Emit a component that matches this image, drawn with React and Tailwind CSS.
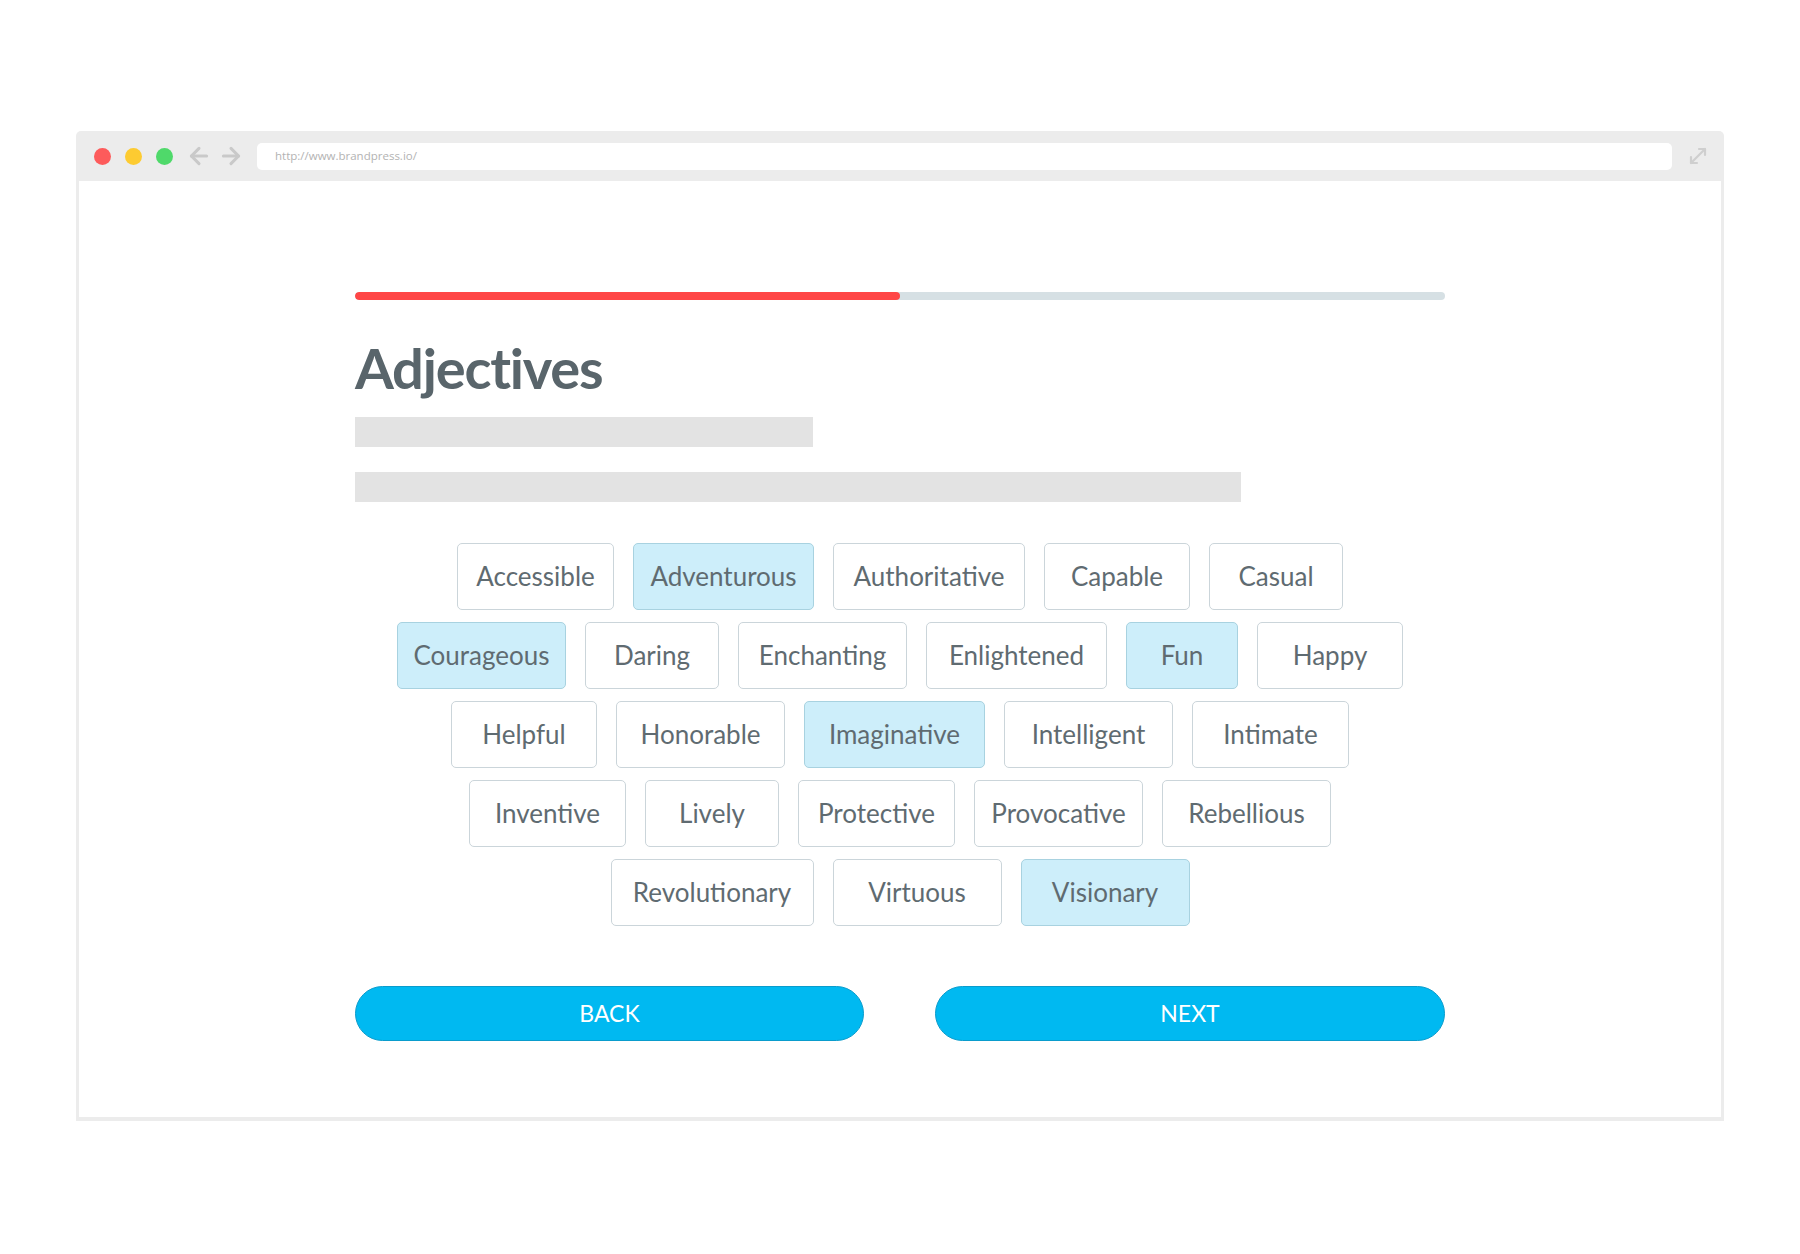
import React from "react";
import { ArrowLeft, ArrowRight, MoveDiagonal } from "lucide-react";

const rows = [
  [
    ["Accessible", "w-[157px]", false],
    ["Adventurous", "w-[181px]", true],
    ["Authoritative", "w-[192px]", false],
    ["Capable", "w-[146px]", false],
    ["Casual", "w-[134px]", false],
  ],
  [
    ["Courageous", "w-[169px]", true],
    ["Daring", "w-[134px]", false],
    ["Enchanting", "w-[169px]", false],
    ["Enlightened", "w-[181px]", false],
    ["Fun", "w-[112px]", true],
    ["Happy", "w-[146px]", false],
  ],
  [
    ["Helpful", "w-[146px]", false],
    ["Honorable", "w-[169px]", false],
    ["Imaginative", "w-[181px]", true],
    ["Intelligent", "w-[169px]", false],
    ["Intimate", "w-[157px]", false],
  ],
  [
    ["Inventive", "w-[157px]", false],
    ["Lively", "w-[134px]", false],
    ["Protective", "w-[157px]", false],
    ["Provocative", "w-[169px]", false],
    ["Rebellious", "w-[169px]", false],
  ],
  [
    ["Revolutionary", "w-[203px]", false],
    ["Virtuous", "w-[169px]", false],
    ["Visionary", "w-[169px]", true],
  ],
];

function Chip({ label, w, selected }) {
  return (
    <div
      className={
        "h-[67px] flex items-center justify-center rounded-[5px] border text-[26px] text-[#5f6b71] " +
        w +
        (selected
          ? " bg-[#cdeefa] border-[#a8d2e0]"
          : " bg-white border-[#cbd5da]")
      }
    >
      {label}
    </div>
  );
}

export default function App() {
  return (
    <div className="min-h-screen bg-white pt-[131px] font-['Lato','Open_Sans',sans-serif]">
      <div className="mx-auto w-[1648px] h-[990px] bg-[#ececec] rounded-t-[5px] px-[3px] pb-[4px] flex flex-col">
        {/* top bar */}
        <div className="h-[50px] flex items-center shrink-0">
          <div className="ml-[15px] flex items-center gap-[14px]">
            <div className="w-[17px] h-[17px] rounded-full bg-[#fd5b5b]" />
            <div className="w-[17px] h-[17px] rounded-full bg-[#fdcb31]" />
            <div className="w-[17px] h-[17px] rounded-full bg-[#4fd96a]" />
          </div>
          <div className="ml-[13px] flex items-center gap-[6px] text-[#c9c9c9]">
            <ArrowLeft size={26} strokeWidth={2.8} />
            <ArrowRight size={26} strokeWidth={2.8} />
          </div>
          <div className="ml-[13px] w-[1415px] h-[27px] bg-white rounded-[5px] flex items-center pl-[18px] text-[11.5px] text-[#b3b3b3] font-['Open_Sans',sans-serif]">
            http://www.brandpress.io/
          </div>
          <div className="ml-[14px] text-[#cfcfcf]">
            <MoveDiagonal size={24} strokeWidth={2.2} />
          </div>
        </div>
        {/* content */}
        <div className="flex-1 bg-white flex flex-col items-center">
          <div className="w-[1090px] pt-[111px] flex flex-col">
            <div className="h-[8px] rounded-full bg-[#d6e0e4] overflow-hidden">
              <div className="h-full w-[545px] rounded-full bg-[#ff4646]" />
            </div>
            <h1 className="mt-[39px] leading-[58px] text-[56px] font-bold text-[#59656b] tracking-[-1.2px]">
              Adjectives
            </h1>
            <div className="mt-[20px] w-[458px] h-[30px] bg-[#e3e3e3]" />
            <div className="mt-[25px] w-[886px] h-[30px] bg-[#e3e3e3]" />
            <div className="mt-[41px] flex flex-col gap-[12px]">
              {rows.map((row, i) => (
                <div key={i} className="flex justify-center gap-[19px]">
                  {row.map(([label, w, sel]) => (
                    <Chip key={label} label={label} w={w} selected={sel} />
                  ))}
                </div>
              ))}
            </div>
            <div className="mt-[60px] flex justify-between">
              <button className="w-[509px] h-[55px] rounded-full bg-[#00b9f1] border border-[#0a9ccc] text-white text-[23px] flex items-center justify-center">
                BACK
              </button>
              <button className="w-[510px] h-[55px] rounded-full bg-[#00b9f1] border border-[#0a9ccc] text-white text-[23px] flex items-center justify-center">
                NEXT
              </button>
            </div>
          </div>
        </div>
      </div>
    </div>
  );
}
